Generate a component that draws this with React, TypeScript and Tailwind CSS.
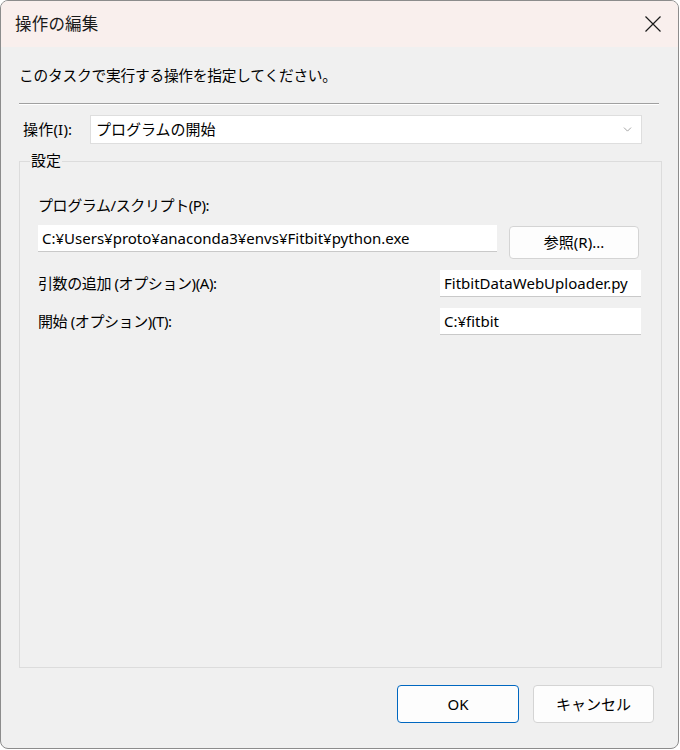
import { ChevronDown } from "lucide-react";

const font = { fontFamily: '"Noto Sans", "Noto Sans CJK JP", sans-serif' };

function TextBox({ value, className }: { value: string; className: string }) {
    return (
        <div className={`h-[27px] bg-white border-b border-[#c9c9c9] flex items-center px-[4px] text-[15px] text-black ${className}`}>
            {value}
        </div>
    );
}

export default function App() {
    return (
        <div className="w-[680px] h-[750px] bg-white" style={font}>
            <div className="w-[679px] h-[749px] rounded-[8px] border border-[#8c8c8c] bg-[#f0f0f0] overflow-hidden flex flex-col">
                {/* title bar */}
                <div className="h-[46px] bg-[#f9efed] flex items-center justify-between pl-[14px] pr-[16px] shrink-0">
                    <span className="text-[16.5px] text-[#1a1a1a] tracking-[0.2px]">操作の編集</span>
                    <svg width="16" height="16" viewBox="0 0 16 16" className="mr-[1px]">
                        <path d="M0.5 0.5 L15.5 15.5 M15.5 0.5 L0.5 15.5" stroke="#1a1a1a" strokeWidth="1.2" fill="none" />
                    </svg>
                </div>

                <div className="flex-1 flex flex-col pl-[18px] pr-[18px]">
                    <p className="mt-[17px] text-[14.7px] leading-[22px] text-black tracking-[-0.2px]">
                        このタスクで実行する操作を指定してください。
                    </p>

                    <div className="mt-[17px] mr-[1px] h-[2px] border-t border-[#a0a0a0] border-b border-b-white" />

                    <div className="mt-[10px] flex items-center gap-[6px] pl-[4px]">
                        <span className="text-[15px] text-black w-[61px] tracking-[0.2px]">操作(I):</span>
                        <div className="flex-1 h-[29px] mr-[18px] bg-white border border-[#dedede] flex items-center justify-between px-[5px]">
                            <span className="text-[15px] text-black">プログラムの開始</span>
                            <ChevronDown className="w-[13px] h-[13px] text-[#8a8a8a] mr-[2px]" strokeWidth={1.4} />
                        </div>
                    </div>

                    {/* group box */}
                    <div className="relative mt-[17px] mr-[-2px] h-[507px] border border-[#dcdcdc]">
                        <span className="absolute left-[10px] top-[-13px] bg-[#f0f0f0] px-[1px] text-[15px] text-black leading-[22px]">
                            設定
                        </span>

                        <div className="pt-[32px] pl-[18px] pr-[20px] flex flex-col">
                            <span className="text-[15px] leading-[22px] text-black tracking-[-0.4px]">プログラム/スクリプト(P):</span>

                            <div className="mt-[9px] flex items-start">
                                <TextBox value="C:¥Users¥proto¥anaconda3¥envs¥Fitbit¥python.exe" className="w-[459px]" />
                                <button className="ml-[12px] w-[130px] h-[33px] mt-[1px] rounded-[4px] bg-[#fdfdfd] border border-[#d4d4d4] text-[15px] text-black">
                                    参照(R)...
                                </button>
                            </div>

                            <div className="mt-[11px] flex items-center justify-between">
                                <span className="text-[15px] text-black tracking-[-0.4px]">引数の追加 (オプション)(A):</span>
                                <TextBox value="FitbitDataWebUploader.py" className="w-[201px]" />
                            </div>

                            <div className="mt-[11px] flex items-center justify-between">
                                <span className="text-[15px] text-black tracking-[-0.4px]">開始 (オプション)(T):</span>
                                <TextBox value="C:¥fitbit" className="w-[201px]" />
                            </div>
                        </div>
                    </div>

                    <div className="mt-[17px] flex justify-end gap-[14px] pr-[6px]">
                        <button className="w-[122px] h-[38px] rounded-[4px] bg-[#fdfdfd] border-[1.5px] border-[#0067c0] text-[15px] text-black">
                            OK
                        </button>
                        <button className="w-[121px] h-[38px] rounded-[4px] bg-[#fdfdfd] border border-[#d4d4d4] text-[15px] text-black">
                            キャンセル
                        </button>
                    </div>
                </div>
            </div>
        </div>
    );
}
